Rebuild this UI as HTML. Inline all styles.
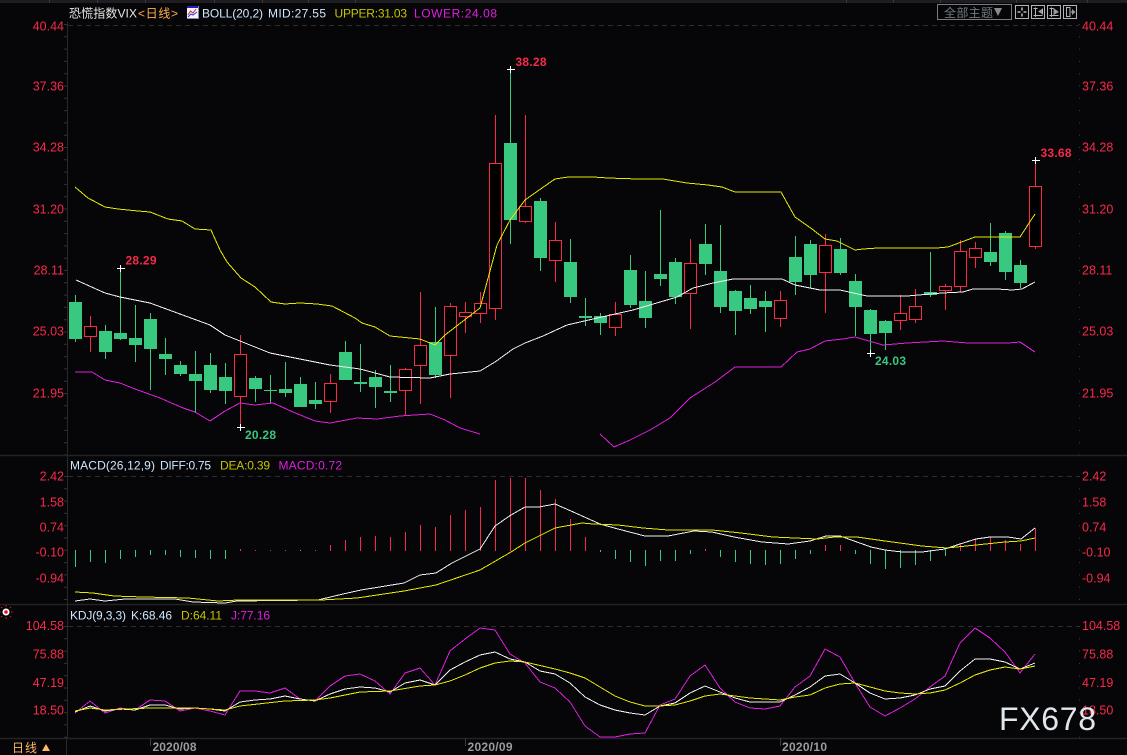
<!DOCTYPE html>
<html><head><meta charset="utf-8"><title>VIX</title>
<style>
html,body{margin:0;padding:0;background:#060608;width:1127px;height:755px;overflow:hidden}
svg{display:block;position:absolute;left:0;top:0}
text{font-family:"Liberation Sans","Noto Sans CJK SC",sans-serif;font-size:12px}
.r{fill:#f8294a;font-size:12.5px}
.b{font-weight:bold;font-size:12px}
.l{fill:none;shape-rendering:crispEdges}
</style></head><body>
<svg width="1127" height="755" viewBox="0 0 1127 755">
<rect width="1127" height="755" fill="#060608"/>
<!-- top strip -->
<rect x="0" y="0" width="1127" height="3" fill="#1d1d22"/>
<path d="M49.5 0V3M97.5 0V3M145.5 0V3M214.5 0V3M262.5 0V3M308.5 0V3M355.5 0V3M846.5 0V3M893.5 0V3M940.5 0V3M1016.5 0V3M1087.5 0V3" stroke="#38383e"/>
<!-- frame -->
<path d="M0 455.5H1127M0 604.5H1127M0 738.5H1127" stroke="#232325" stroke-width="1.4"/>
<path d="M67.5 22V738M66.5 738V755" stroke="#29292b"/>
<path d="M65.5 24V455M65.5 476V604M65.5 626V738" stroke="#333" stroke-width="3" stroke-dasharray="1 11.3"/>
<path d="M1079.5 24V455M1079.5 476V604M1079.5 626V738" stroke="#3a3a3a" stroke-dasharray="1 11.3"/>
<path d="M68 25.5H1079M68 476.5H1079M68 626.5H1079" stroke="#2d2d2d" stroke-dasharray="5 4"/>
<path d="M150.5 738V746M465.5 738V746M780.5 738V746" stroke="#3a3a3a"/>

<!-- green wicks -->
<path fill="none" stroke="#38c880" d="M75.5 295V342M105.5 325V359M120.5 268V340M135.5 305V362M150.5 313V390M165.5 338V375M180.5 361V376M195.5 351V413M210.5 353V393M225.5 363V404M255.5 376V402M270.5 375V404M285.5 362V397M300.5 377V407M315.5 382V409M345.5 341V380M360.5 344V392M375.5 370V408M390.5 365V402M435.5 307V378M510.5 69V244M540.5 198V271M570.5 239V303M585.5 298V326M600.5 313V335M630.5 255V308M645.5 271V328M660.5 210V286M675.5 258V304M705.5 224V275M720.5 225V313M735.5 290V335M750.5 285V314M765.5 291V332M795.5 236V295M810.5 240V288M840.5 238V275M855.5 274V336M870.5 309V353M885.5 320V350M930.5 252V297M990.5 223V266M1005.5 231V280M1020.5 260V288"/>
<!-- green bodies -->
<path fill="#38c880" d="M69 302h13v37h-13zM99 331h13v21h-13zM114 333h13v6h-13zM129 338h13v7h-13zM144 319h13v30h-13zM159 354h13v5h-13zM174 365h13v9h-13zM189 374h13v7h-13zM204 365h13v25h-13zM219 377h13v14h-13zM249 378h13v11h-13zM264 390h13v1h-13zM279 389h13v4h-13zM294 384h13v23h-13zM309 400h13v4h-13zM339 352h13v28h-13zM354 382h13v2h-13zM369 377h13v10h-13zM384 391h13v2h-13zM429 342h13v33h-13zM504 143h13v77h-13zM534 201h13v57h-13zM564 262h13v35h-13zM579 316h13v2h-13zM594 316h13v7h-13zM624 270h13v35h-13zM639 301h13v17h-13zM654 274h13v5h-13zM669 262h13v35h-13zM699 244h13v20h-13zM714 271h13v36h-13zM729 291h13v20h-13zM744 298h13v11h-13zM759 301h13v6h-13zM789 257h13v25h-13zM804 244h13v31h-13zM834 249h13v24h-13zM849 281h13v26h-13zM864 310h13v24h-13zM879 321h13v12h-13zM924 292h13v3h-13zM984 252h13v10h-13zM999 233h13v39h-13zM1014 265h13v18h-13z"/>
<!-- red wicks -->
<path fill="none" stroke="#f8294a" d="M90.5 316V352M240.5 335V427M330.5 374V413M405.5 368V415M420.5 292V404M450.5 303V398M465.5 302V333M480.5 292V323M495.5 115V320M525.5 115V223M555.5 222V282M615.5 302V336M690.5 239V329M780.5 291V327M825.5 234V313M900.5 295V330M915.5 289V323M945.5 284V310M960.5 240V292M975.5 242V268M1035.5 160V249"/>
<!-- red bodies -->
<path fill="#000" stroke="#f8294a" d="M84.5 326.5h12v10h-12zM234.5 354.5h12v42h-12zM324.5 383.5h12v18h-12zM399.5 369.5h12v21h-12zM414.5 345.5h12v20h-12zM444.5 306.5h12v49h-12zM459.5 312.5h12v4h-12zM474.5 303.5h12v10h-12zM489.5 163.5h12v145h-12zM519.5 206.5h12v15h-12zM549.5 240.5h12v20h-12zM609.5 314.5h12v13h-12zM684.5 263.5h12v30h-12zM774.5 300.5h12v18h-12zM819.5 245.5h12v27h-12zM894.5 313.5h12v7h-12zM909.5 306.5h12v13h-12zM939.5 286.5h12v4h-12zM954.5 251.5h12v35h-12zM969.5 248.5h12v9h-12zM1029.5 186.5h12v60h-12z"/>

<!-- BOLL -->
<polyline class="l" stroke="#e8e800" points="75,187 88,198 105,207 118,209 138,211 150,212 168,219 182,221 195,229 211,230 220,250 227,262 241,278 255,287 271,302 285,304 300,303 317,304 332,306 355,318 362,323 375,327 390,336 410,338 420,339 435,345 445,335 480,308 497,245 510,220 525,200 542,188 555,179 568,177 593,177 608,178 638,179 663,179 687,183 708,185 722,187 735,192 781,192 795,217 812,229 825,239 837,241 855,250 863,249 878,248 937,248 948,247 975,237 1020,237 1035,214"/>
<polyline class="l" stroke="#f0f0f0" points="76,280 105,293 120,297 150,303 180,314 210,325 225,335 240,341 270,353 300,359 330,365 360,369 390,377 430,378 450,374 480,371 495,362 513,349 525,343 543,336 567,325 593,319 633,310 677,297 693,288 713,283 733,279 782,279 795,285 820,290 840,290 867,296 907,296 942,293 963,292 973,289 997,289 1012,290 1022,289 1035,282"/>
<polyline class="l" stroke="#e01ee0" points="75,372 92,372 105,380 120,383 135,389 160,398 183,408 195,412 210,421 225,411 240,403 255,405 273,403 293,412 315,421 330,423 357,418 377,419 400,416 430,414 445,420 460,428 480,434"/>
<polyline class="l" stroke="#e01ee0" points="600,434 614,447 630,440 650,430 670,418 690,398 715,382 735,367 781,367 797,352 810,349 825,341 843,339 855,337 883,345 907,343 943,341 968,343 1008,343 1020,342 1035,352"/>

<!-- crosses -->
<path stroke="#fff" fill="none" d="M117 268.5h8M120.5 265v7M237 427.5h8M240.5 424v7M507 69.5h8M510.5 66v7M867 353.5h8M870.5 350v7M1032 160.5h8M1035.5 157v7"/>
<text x="125.5" y="264.5" class="b" fill="#f8294a" textLength="31">28.29</text>
<text x="515.5" y="66" class="b" fill="#f8294a" textLength="31">38.28</text>
<text x="1040.5" y="157" class="b" fill="#f8294a" textLength="31">33.68</text>
<text x="245" y="439" class="b" fill="#38c880" textLength="31">20.28</text>
<text x="875" y="365" class="b" fill="#38c880" textLength="31">24.03</text>

<!-- MACD hist -->
<path fill="none" stroke="#38c880" d="M75.5 550V567M90.5 550V562M105.5 550V563M120.5 550V559M135.5 550V557M150.5 550V555M165.5 550V555M180.5 550V557M195.5 550V558M210.5 550V559M225.5 550V559M300.5 550V551M600.5 550V552M615.5 550V559M630.5 550V562M645.5 550V566M660.5 550V561M675.5 550V561M690.5 550V554M720.5 550V557M735.5 550V562M750.5 550V564M765.5 550V565M780.5 550V564M795.5 550V559M810.5 550V554M855.5 550V554M870.5 550V564M885.5 550V569M900.5 550V568M915.5 550V565M930.5 550V561M945.5 550V556"/>
<path fill="none" stroke="#f8294a" d="M240.5 549V551M255.5 550V551M270.5 550V551M285.5 550V551M315.5 550V551M330.5 545V551M345.5 540V551M360.5 537V551M375.5 536V551M390.5 537V551M405.5 532V551M420.5 525V551M435.5 527V551M450.5 515V551M465.5 510V551M480.5 507V551M495.5 480V551M510.5 478V551M525.5 478V551M540.5 490V551M555.5 499V551M570.5 519V551M585.5 537V551M705.5 549V551M825.5 545V551M840.5 545V551M960.5 545V551M975.5 539V551M990.5 537V551M1005.5 540V551M1020.5 544V551M1035.5 528V551"/>
<polyline class="l" stroke="#f0f0f0" points="75,601 90,599 105,601 125,599 175,599 193,602 225,603 237,601 318,600 343,594 361,590 404,583 420,575 436,573 452,563 480,549 495,526 511,515 525,507 539,507 555,504 571,511 600,524 618,529 645,536 668,536 694,531 712,532 734,537 762,542 788,544 810,541 826,536 840,536 871,547 885,550 902,552 922,552 945,549 960,544 976,539 990,537 1008,537 1021,539 1035,528"/>
<polyline class="l" stroke="#e8e800" points="75,592 93,593 114,596 143,597 188,598 218,601 239,600 321,600 357,598 404,591 436,585 480,570 511,552 525,543 555,528 582,523 593,524 618,525 643,528 668,530 712,530 741,533 773,537 817,539 835,537 857,537 885,541 922,546 947,548 976,545 1005,542 1021,541 1035,538"/>

<!-- KDJ -->
<polyline class="l" stroke="#e01ee0" points="75,713 90,701 105,713 120,708 135,710 150,700 165,701 180,711 195,708 210,711 225,715 240,691 255,691 270,693 285,688 300,699 315,701 330,686 345,676 360,674 375,681 390,694 405,673 420,668 435,685 450,651 465,639 480,628 495,630 510,654 525,663 540,682 555,688 570,702 585,726 600,737 615,737 630,734 645,733 660,705 675,699 690,676 705,665 720,688 735,702 750,708 765,709 780,706 795,687 810,676 825,649 840,657 855,683 870,707 885,716 900,708 915,699 930,687 945,676 960,643 975,628 990,638 1005,652 1020,673 1035,654"/>
<polyline class="l" stroke="#f0f0f0" points="75,712 90,706 105,711 120,709 135,710 150,705 165,705 180,709 195,708 210,709 225,711 240,702 255,700 270,699 285,696 300,699 315,701 330,694 345,689 360,687 375,688 390,692 405,683 420,680 435,685 450,670 465,662 480,655 495,652 510,659 525,662 540,671 555,674 570,683 585,697 600,705 615,710 630,713 645,715 660,706 675,703 690,693 705,686 720,692 735,698 750,702 765,702 780,702 795,695 810,687 825,676 840,674 855,683 870,693 885,699 900,698 915,695 930,689 945,686 960,671 975,659 990,659 1005,662 1020,669 1035,663"/>
<polyline class="l" stroke="#e8e800" points="75,711 90,708 105,710 150,708 195,708 225,710 240,706 285,701 315,700 330,698 360,692 390,691 420,686 435,685 450,681 465,675 480,668 495,663 510,661 525,662 555,669 570,673 585,678 600,687 615,696 630,702 645,706 660,706 675,705 690,701 705,696 720,694 735,696 750,698 765,699 780,700 795,697 810,695 825,688 840,684 855,683 870,687 885,691 900,693 915,694 930,693 945,690 960,683 975,675 990,670 1005,667 1020,669 1035,666"/>

<!-- axis labels left -->
<g class="r" text-anchor="end">
<text class="r" x="64" y="30.5">40.44</text>
<text class="r" x="64" y="90.5">37.36</text>
<text class="r" x="64" y="151.5">34.28</text>
<text class="r" x="64" y="213.5">31.20</text>
<text class="r" x="64" y="274.5">28.11</text>
<text class="r" x="64" y="335.5">25.03</text>
<text class="r" x="64" y="397.5">21.95</text>
<text class="r" x="64" y="480.5">2.42</text>
<text class="r" x="64" y="506.5">1.58</text>
<text class="r" x="64" y="531.5">0.74</text>
<text class="r" x="64" y="556.5">-0.10</text>
<text class="r" x="64" y="582.5">-0.94</text>
<text class="r" x="64" y="630">104.58</text>
<text class="r" x="64" y="658.5">75.88</text>
<text class="r" x="64" y="687">47.19</text>
<text class="r" x="64" y="714.5">18.50</text>
</g>
<!-- axis labels right -->
<text class="r" x="1082" y="30.5">40.44</text>
<text class="r" x="1082" y="90.5">37.36</text>
<text class="r" x="1082" y="151.5">34.28</text>
<text class="r" x="1082" y="213.5">31.20</text>
<text class="r" x="1082" y="274.5">28.11</text>
<text class="r" x="1082" y="335.5">25.03</text>
<text class="r" x="1082" y="397.5">21.95</text>
<text class="r" x="1082" y="480.5">2.42</text>
<text class="r" x="1082" y="506.5">1.58</text>
<text class="r" x="1082" y="531.5">0.74</text>
<text class="r" x="1082" y="556.5">-0.10</text>
<text class="r" x="1082" y="582.5">-0.94</text>
<text class="r" x="1082" y="630">104.58</text>
<text class="r" x="1082" y="658.5">75.88</text>
<text class="r" x="1082" y="687">47.19</text>
<text class="r" x="1082" y="714.5">18.50</text>

<!-- header -->
<text x="69" y="17.5" fill="#e6e6e6" textLength="68">恐慌指数VIX</text>
<text x="138" y="17.5" fill="#ffb050" textLength="40">&lt;日线&gt;</text>
<rect x="187" y="6" width="12" height="13" fill="#8a8a9a"/>
<rect x="187" y="6" width="11" height="12" fill="#f4f4ff"/>
<rect x="187" y="6" width="11" height="2" fill="#2020c0"/>
<path d="M188 15l2.500-4 2.500 2 3-4" fill="none" stroke="#e02020"/>
<path d="M188 17l3-3 2 1 4-3" fill="none" stroke="#2040e0"/>
<text x="202" y="17.5" fill="#cfe6ff" textLength="61">BOLL(20,2)</text>
<text x="268" y="17.5" fill="#cfe6ff" textLength="58">MID:27.55</text>
<text x="334.500" y="17.5" fill="#c4c400" textLength="72.500">UPPER:31.03</text>
<text x="414" y="17.5" fill="#e01ee0" textLength="83">LOWER:24.08</text>

<text x="70" y="469.5" fill="#cfe6ff" textLength="85">MACD(26,12,9)</text>
<text x="160" y="469.5" fill="#cfe6ff" textLength="51">DIFF:0.75</text>
<text x="220" y="469.5" fill="#c4c400" textLength="50">DEA:0.39</text>
<text x="278.500" y="469.5" fill="#e01ee0" textLength="63.500">MACD:0.72</text>

<text x="70" y="619.5" fill="#cfe6ff" textLength="56">KDJ(9,3,3)</text>
<text x="131" y="619.5" fill="#cfe6ff" textLength="41">K:68.46</text>
<text x="181" y="619.5" fill="#c4c400" textLength="41">D:64.11</text>
<text x="231" y="619.5" fill="#e01ee0" textLength="39">J:77.16</text>

<!-- top right buttons -->
<rect x="937.500" y="4.500" width="74" height="15" fill="none" stroke="#7a7a7a"/>
<text x="944" y="17" fill="#707a80" textLength="49">全部主题</text>
<path d="M994 8h8l-4 8z" fill="#8a8a8a"/>
<g fill="none" stroke="#b4b4b4">
<rect x="1015.500" y="5.500" width="13" height="13"/>
<rect x="1031.500" y="5.500" width="13" height="13"/>
<rect x="1047.500" y="5.500" width="13" height="13"/>
<rect x="1063.500" y="5.500" width="13" height="13"/>
<path d="M1022 7.500v3M1022 13.500v3M1017.500 12h3M1023.500 12h3" stroke-width="1.600"/>
<path d="M1035.500 7.500V17M1033.500 8.500h4M1033.500 15.500h9M1042.500 8.500v6"/>
<path d="M1051.500 7.500V17M1049.500 8.500h4M1049.500 15.500h9"/>
<path d="M1066.500 7.500h3.500v9h-3.500zM1071 12h4"/>
</g>
<path d="M1042 9v5l-4-2.500zM1053.500 8l5.500 4-5.500 3zM1072 9l3.500 3-3.500 3z" fill="#9a9a9a"/>

<!-- left marker -->
<circle cx="6" cy="612" r="3.500" fill="#fff"/>
<circle cx="6" cy="612" r="1.800" fill="#e01020"/>
<path d="M6 605v1.500M6 617.500v1.500M-1 612h1.500M11 612h1.500M1 607l1 1M10 616l1 1M11 607l-1 1M2 616l-1 1" stroke="#e02030" fill="none"/>

<!-- bottom -->
<text x="12" y="752" fill="#ffb868" font-size="12" textLength="25">日线</text>
<path d="M42 751l4-7 4 7z" fill="#ffb868"/>
<text x="152.500" y="751" class="b" fill="#9b9b9b" textLength="44">2020/08</text>
<text x="467.500" y="751" class="b" fill="#9b9b9b" textLength="45">2020/09</text>
<text x="782" y="751" class="b" fill="#9b9b9b" textLength="45">2020/10</text>

<!-- watermark -->
<text x="999" y="730" fill="#dfe6ec" style="font-size:32px" textLength="97">FX678</text>
</svg>
</body></html>
